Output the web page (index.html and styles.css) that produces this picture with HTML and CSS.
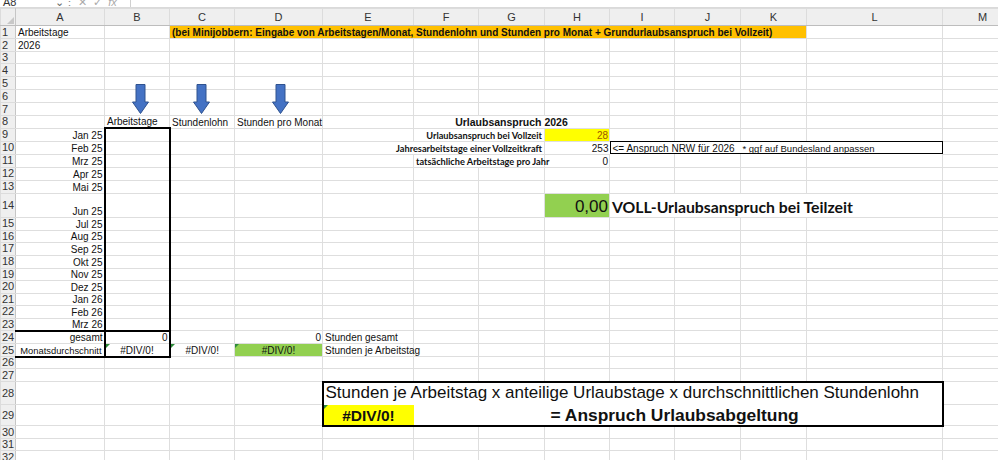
FILE: index.html
```html
<!DOCTYPE html>
<html lang="de">
  <head>
    <meta charset="UTF-8" />
    <meta name="viewport" content="width=device-width,initial-scale=1.0" />
    <title>Urlaubsabgeltung 2026</title>
    <link rel="stylesheet" href="styles.css">
  </head>
  <body>
    <div class="formula-bar">
      <span class="name-box">A8</span>
      <span class="name-drop">&#8964;</span>
      <span class="bar-sep">&#8942;</span>
      <span class="bar-icons">&#10005;&nbsp;&nbsp;&#10003;&nbsp;&nbsp;<i>fx</i></span>
      <span class="formula-input"></span>
    </div>
    <table class="sheet">
      <colgroup>
        <col class="c-hd"><col class="c-a"><col class="c-b"><col class="c-c"><col class="c-d"><col class="c-e"><col class="c-f">
        <col class="c-g"><col class="c-h"><col class="c-i"><col class="c-j"><col class="c-k"><col class="c-l"><col class="c-m">
      </colgroup>
      <tr class="head">
        <th class="corner"></th><th>A</th><th>B</th><th>C</th><th>D</th><th>E</th><th>F</th><th>G</th><th>H</th><th>I</th><th>J</th><th>K</th><th>L</th><th>M</th>
      </tr>
      <tr>
        <th>1</th><td>Arbeitstage</td><td></td>
        <td colspan="9" class="note">(bei Minijobbern: Eingabe von Arbeitstagen/Monat, Stundenlohn und Stunden pro Monat + Grundurlaubsanspruch bei Vollzeit)</td>
        <td></td><td></td>
      </tr>
      <tr><th>2</th><td>2026</td><td></td><td></td><td></td><td></td><td></td><td></td><td></td><td></td><td></td><td></td><td></td><td></td></tr>
      <tr class="r12"><th>3</th><td></td><td></td><td></td><td></td><td></td><td></td><td></td><td></td><td></td><td></td><td></td><td></td><td></td></tr>
      <tr><th>4</th><td></td><td></td><td></td><td></td><td></td><td></td><td></td><td></td><td></td><td></td><td></td><td></td><td></td></tr>
      <tr>
        <th>5</th><td></td>
        <td class="shape"><svg class="arrow arrow-b" viewBox="0 0 17 30"><polygon points="4,0.5 13,0.5 13,18 16.5,18 8.5,29.5 0.5,18 4,18" /></svg></td>
        <td class="shape"><svg class="arrow arrow-c" viewBox="0 0 17 30"><polygon points="4,0.5 13,0.5 13,18 16.5,18 8.5,29.5 0.5,18 4,18" /></svg></td>
        <td class="shape"><svg class="arrow arrow-d" viewBox="0 0 17 30"><polygon points="4,0.5 13,0.5 13,18 16.5,18 8.5,29.5 0.5,18 4,18" /></svg></td>
        <td></td><td></td><td></td><td></td><td></td><td></td><td></td><td></td><td></td>
      </tr>
      <tr><th>6</th><td></td><td></td><td></td><td></td><td></td><td></td><td></td><td></td><td></td><td></td><td></td><td></td><td></td></tr>
      <tr><th>7</th><td></td><td></td><td></td><td></td><td></td><td></td><td></td><td></td><td></td><td></td><td></td><td></td><td></td></tr>
      <tr class="r12">
        <th>8</th><td></td><td>Arbeitstage</td><td>Stundenlohn</td><td>Stunden pro Monat</td><td></td>
        <td colspan="3" class="title">Urlaubsanspruch 2026</td>
        <td></td><td></td><td></td><td></td><td></td>
      </tr>
      <tr>
        <th>9</th><td class="num">Jan 25</td><td class="bx bx-top"></td><td></td><td></td><td></td>
        <td colspan="2" class="label">Urlaubsanspruch bei Vollzeit</td>
        <td class="num yellow gold">28</td>
        <td></td><td></td><td></td><td></td><td></td>
      </tr>
      <tr>
        <th>10</th><td class="num">Feb 25</td><td class="bx"></td><td></td><td></td>
        <td colspan="3" class="label">Jahresarbeitstage einer Vollzeitkraft</td>
        <td class="num">253</td>
        <td colspan="4" class="hint"><span class="hint-a">&lt;= Anspruch NRW für 2026</span><span class="hint-b">* ggf auf Bundesland anpassen</span></td>
        <td></td>
      </tr>
      <tr>
        <th>11</th><td class="num">Mrz 25</td><td class="bx"></td><td></td><td></td><td></td>
        <td colspan="2" class="label">tatsächliche Arbeitstage pro Jahr</td>
        <td class="num">0</td>
        <td></td><td></td><td></td><td></td><td></td>
      </tr>
      <tr><th>12</th><td class="num">Apr 25</td><td class="bx"></td><td></td><td></td><td></td><td></td><td></td><td></td><td></td><td></td><td></td><td></td><td></td></tr>
      <tr><th>13</th><td class="num">Mai 25</td><td class="bx"></td><td></td><td></td><td></td><td></td><td></td><td></td><td></td><td></td><td></td><td></td><td></td></tr>
      <tr class="r24">
        <th>14</th><td class="num">Jun 25</td><td class="bx"></td><td></td><td></td><td></td><td></td><td></td>
        <td class="num green big">0,00</td>
        <td colspan="4" class="headline">VOLL-Urlaubsanspruch bei Teilzeit</td>
        <td></td>
      </tr>
      <tr><th>15</th><td class="num">Jul 25</td><td class="bx"></td><td></td><td></td><td></td><td></td><td></td><td></td><td></td><td></td><td></td><td></td><td></td></tr>
      <tr class="r12"><th>16</th><td class="num">Aug 25</td><td class="bx"></td><td></td><td></td><td></td><td></td><td></td><td></td><td></td><td></td><td></td><td></td><td></td></tr>
      <tr><th>17</th><td class="num">Sep 25</td><td class="bx"></td><td></td><td></td><td></td><td></td><td></td><td></td><td></td><td></td><td></td><td></td><td></td></tr>
      <tr><th>18</th><td class="num">Okt 25</td><td class="bx"></td><td></td><td></td><td></td><td></td><td></td><td></td><td></td><td></td><td></td><td></td><td></td></tr>
      <tr class="r12"><th>19</th><td class="num">Nov 25</td><td class="bx"></td><td></td><td></td><td></td><td></td><td></td><td></td><td></td><td></td><td></td><td></td><td></td></tr>
      <tr><th>20</th><td class="num">Dez 25</td><td class="bx"></td><td></td><td></td><td></td><td></td><td></td><td></td><td></td><td></td><td></td><td></td><td></td></tr>
      <tr class="r12"><th>21</th><td class="num">Jan 26</td><td class="bx"></td><td></td><td></td><td></td><td></td><td></td><td></td><td></td><td></td><td></td><td></td><td></td></tr>
      <tr><th>22</th><td class="num">Feb 26</td><td class="bx"></td><td></td><td></td><td></td><td></td><td></td><td></td><td></td><td></td><td></td><td></td><td></td></tr>
      <tr class="r12"><th>23</th><td class="num bx-bottom">Mrz 26</td><td class="bx bx-bottom"></td><td></td><td></td><td></td><td></td><td></td><td></td><td></td><td></td><td></td><td></td><td></td></tr>
      <tr>
        <th>24</th><td class="num">gesamt</td><td class="num bx">0</td><td></td><td class="num">0</td>
        <td>Stunden gesamt</td>
        <td></td><td></td><td></td><td></td><td></td><td></td><td></td><td></td>
      </tr>
      <tr>
        <th>25</th><td class="num bx-bottom tight">Monatsdurchschnitt</td>
        <td class="mid bx bx-bottom err">#DIV/0!</td>
        <td class="mid err">#DIV/0!</td>
        <td class="mid green err">#DIV/0!</td>
        <td>Stunden je Arbeitstag</td>
        <td></td><td></td><td></td><td></td><td></td><td></td><td></td><td></td>
      </tr>
      <tr class="r12"><th>26</th><td></td><td></td><td></td><td></td><td></td><td></td><td></td><td></td><td></td><td></td><td></td><td></td><td></td></tr>
      <tr><th>27</th><td></td><td></td><td></td><td></td><td></td><td></td><td></td><td></td><td></td><td></td><td></td><td></td><td></td></tr>
      <tr class="r23">
        <th>28</th><td></td><td></td><td></td><td></td>
        <td colspan="8" class="formula">Stunden je Arbeitstag x anteilige Urlaubstage x durchschnittlichen Stundenlohn</td>
        <td></td>
      </tr>
      <tr class="r21">
        <th>29</th><td></td><td></td><td></td><td></td>
        <td class="mid yellow result err">#DIV/0!</td>
        <td colspan="7" class="claim">= Anspruch Urlaubsabgeltung</td>
        <td></td>
      </tr>
      <tr><th>30</th><td></td><td></td><td></td><td></td><td></td><td></td><td></td><td></td><td></td><td></td><td></td><td></td><td></td></tr>
      <tr class="r12"><th>31</th><td></td><td></td><td></td><td></td><td></td><td></td><td></td><td></td><td></td><td></td><td></td><td></td><td></td></tr>
      <tr><th>32</th><td></td><td></td><td></td><td></td><td></td><td></td><td></td><td></td><td></td><td></td><td></td><td></td><td></td></tr>
    </table>
  </body>
</html>
```

FILE: styles.css
```css
body {
  margin: 0;
  overflow: hidden;
  background: #fff;
  font-family: "Liberation Sans", Arial, sans-serif;
}

/* formula bar, only its lower edge is in view */
.formula-bar {
  height: 7px;
  overflow: hidden;
  display: flex;
  align-items: flex-end;
  font-size: 11px;
  line-height: 10px;
  color: #333;
  border-bottom: 1px solid #dadada;
}
.name-box {
  width: 52px;
  padding-left: 3px;
}
.name-drop {
  width: 9px;
  color: #666;
}
.bar-sep {
  width: 14px;
  color: #888;
}
.bar-icons {
  width: 52px;
  color: #aaa;
}
.formula-input {
  flex: 1;
  height: 10px;
  border-left: 1px solid #d0d0d0;
}

/* sheet grid */
.sheet {
  border-collapse: collapse;
  table-layout: fixed;
  width: 1022px;
  font-size: 10px;
  color: #111;
}
.sheet tr {
  height: 13px;
}
.sheet tr.r12 {
  height: 12px;
}
.sheet tr.r24 {
  height: 24px;
}
.sheet tr.r23 {
  height: 23px;
}
.sheet tr.r21 {
  height: 21px;
}
.sheet td {
  border: 1px solid #dedede;
  padding: 0 2px;
  line-height: 11px;
  white-space: nowrap;
  vertical-align: bottom;
  position: relative;
}
.sheet th {
  background: #efefef;
  border: 1px solid #dcdcdc;
  color: #333;
  font-weight: normal;
  font-size: 11px;
  line-height: 11px;
  padding: 0;
}
.sheet tr th:first-child {
  text-align: left;
  padding-left: 1px;
  border-right-color: #c6c6c6;
}
.sheet tr.head {
  height: 17px;
}
.sheet tr.head th {
  text-align: center;
  vertical-align: middle;
  border-bottom-color: #bdbdbd;
}
.sheet th.corner {
  position: relative;
}
.sheet th.corner::after {
  content: "";
  position: absolute;
  right: 1px;
  bottom: 1px;
  border-left: 7px solid transparent;
  border-bottom: 7px solid #c8c8c8;
}

.c-hd { width: 15px; }
.c-a { width: 89px; }
.c-b { width: 65px; }
.c-c { width: 65px; }
.c-d { width: 88px; }
.c-e { width: 91px; }
.c-f { width: 65px; }
.c-g { width: 66px; }
.c-h { width: 65px; }
.c-i { width: 65px; }
.c-j { width: 66px; }
.c-k { width: 66px; }
.c-l { width: 136px; }
.c-m { width: 80px; }

/* cell formats */
.sheet .num {
  text-align: right;
  padding-right: 1px;
}
.sheet .tight {
  padding: 0 2px 0 0;
  font-size: 9.4px;
}
.sheet .mid {
  text-align: center;
}
.sheet .yellow {
  background: #ffff00;
}
.sheet .green {
  background: #92d050;
}
.sheet .gold {
  color: #9c5700;
}
.sheet .note {
  background: #ffc000;
  font-weight: bold;
}
.sheet .title {
  text-align: center;
  font-weight: bold;
  font-size: 10.5px;
}
.sheet .label {
  text-align: right;
  font-family: Lato, "Liberation Sans", sans-serif;
  font-weight: bold;
  font-size: 9.2px;
}
.sheet .hint {
  border-style: hidden;
  box-shadow: inset 0 0 0 1px #000;
  padding-left: 3px;
}
.hint-a {
  display: inline-block;
  width: 130px;
}
.hint-b {
  font-size: 9.5px;
}
.sheet .big {
  font-size: 17px;
  line-height: 20px;
}
.sheet .headline {
  font-family: Lato, "Liberation Sans", sans-serif;
  font-weight: bold;
  font-size: 15.8px;
  line-height: 20px;
}

/* thick outline round the working days */
.sheet .bx {
  border-left: 2px solid #000;
  border-right: 2px solid #000;
}
.sheet .bx-top {
  border-top: 2px solid #000;
}
.sheet .bx-bottom {
  border-bottom: 2px solid #000;
}

/* green error marker in the upper left corner */
.err::before {
  content: "";
  position: absolute;
  left: 0;
  top: 0;
  border-top: 4px solid #2e8b3a;
  border-right: 4px solid transparent;
}

/* drawn arrows above the input columns */
.shape {
  overflow: visible;
}
.arrow {
  position: absolute;
  top: 7px;
  width: 17px;
  height: 30px;
  fill: #4472c4;
  stroke: #2f528f;
  stroke-width: 1;
}
.arrow-b { left: 27px; }
.arrow-c { left: 23px; }
.arrow-d { left: 37px; }

/* result box */
.sheet .formula {
  font-size: 17px;
  line-height: 20px;
  padding: 0 2px 2px;
  border: 2px solid #000;
  border-bottom-style: hidden;
}
.sheet .result {
  font-weight: bold;
  font-size: 15.5px;
  line-height: 19px;
  border-left: 2px solid #000;
  border-bottom: 2px solid #000;
  border-right-style: hidden;
}
.sheet .claim {
  font-weight: bold;
  font-size: 17.4px;
  line-height: 19px;
  padding-left: 137px;
  border-right: 2px solid #000;
  border-bottom: 2px solid #000;
}
```
